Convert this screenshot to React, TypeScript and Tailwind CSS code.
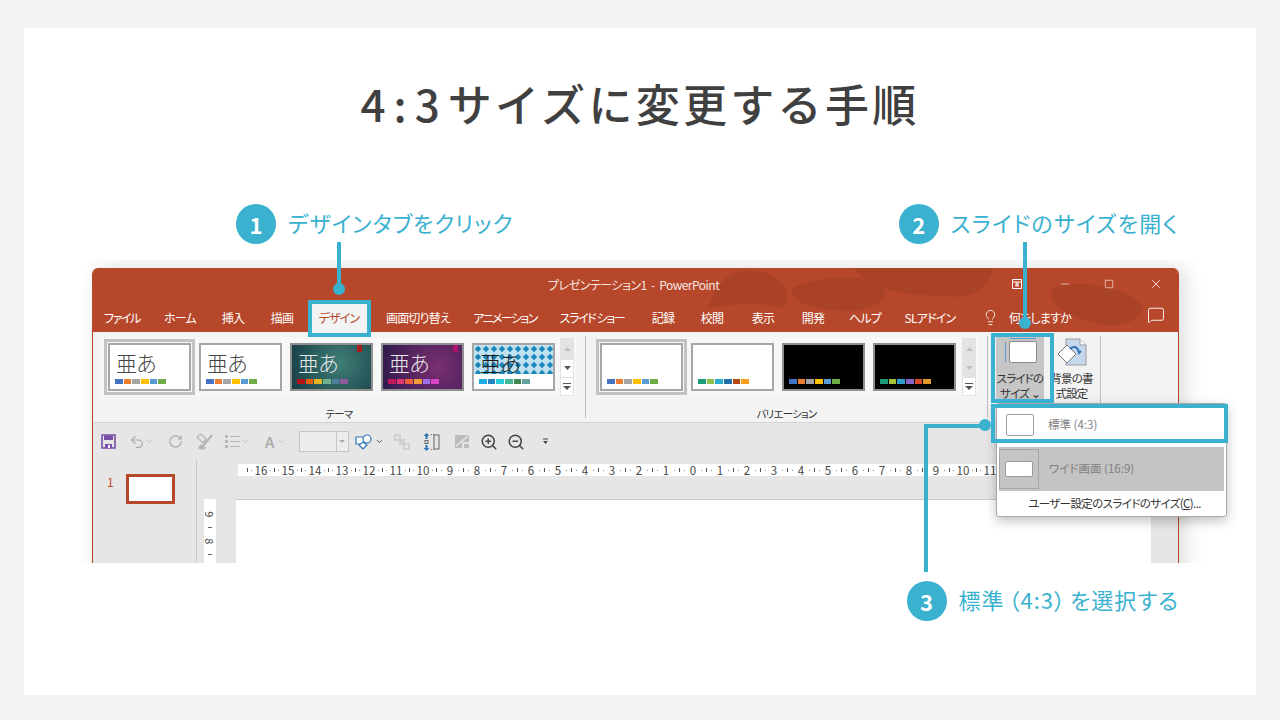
import React from "react";
import { Lightbulb, MessageSquare, Minus, Square, X, ZoomIn, ZoomOut, Undo2, RotateCw, ChevronDown } from "lucide-react";

const cyan = "bg-[#3ab1cf]";
const office = ["#4472c4", "#ed7d31", "#a5a5a5", "#ffc000", "#5b9bd5", "#70ad47"];

const tabs = [
  { label: "ファイル", cls: "w-[50px] tracking-[-1.4px]" },
  { label: "ホーム", cls: "w-[66px]" },
  { label: "挿入", cls: "w-[40px]" },
  { label: "描画", cls: "w-[58px]" },
  { label: "デザイン", cls: "w-[56px] bg-[#f3f3f3] text-[#b7472a]" },
  { label: "画面切り替え", cls: "w-[102px]" },
  { label: "アニメーション", cls: "w-[72px] tracking-[-1.6px]" },
  { label: "スライド ショー", cls: "w-[102px] tracking-[-1.4px]" },
  { label: "記録", cls: "w-[40px]" },
  { label: "校閲", cls: "w-[58px]" },
  { label: "表示", cls: "w-[44px]" },
  { label: "開発", cls: "w-[56px]" },
  { label: "ヘルプ", cls: "w-[48px]" },
  { label: "SLアドイン", cls: "w-[82px]" },
];

type ThumbProps = {
  bg?: string;
  glyphs?: string;
  colors: string[];
  dark?: boolean;
  ink?: boolean;
  selected?: boolean;
  children?: React.ReactNode;
};

function Thumb({ bg = "bg-white", glyphs, colors, dark, ink, selected, children }: ThumbProps) {
  const glyphColor = dark ? "text-[#e8e8e8]" : ink ? "text-[#1a1a1a]" : "text-[#444]";
  const card = (
    <div className={`relative h-[48px] w-[83px] shrink-0 overflow-hidden border-2 ${dark ? "border-[#8f8f8f]" : "border-[#a6a6a6]"} ${bg}`}>
      {children}
      {glyphs && (
        <span className={`absolute left-[6px] top-[3px] text-[21px] font-light leading-[28px] ${glyphColor}`}>
          {glyphs}
        </span>
      )}
      <div className="absolute left-[5px] top-[34px] flex gap-[1px]">
        {colors.map((c, i) => (
          <span key={i} className="h-[5px] w-[7.7px]" style={{ background: c }} />
        ))}
      </div>
    </div>
  );
  if (!selected) return card;
  return <div className="-mx-[4px] -my-[4px] border-[3px] border-[#c2c2c2] p-[1px]">{card}</div>;
}

function GalleryScroll({ first }: { first?: boolean }) {
  return (
    <div className="flex h-[58px] w-[14px] flex-col border border-[#e3e3e3] text-[#8a8a8a]">
      <span className="flex h-[21px] items-center justify-center bg-[#e3e3e3]">
        <svg width="7" height="4"><path d="M0 4 L3.5 0 L7 4Z" fill="#c0c0c0" /></svg>
      </span>
      <span className={`flex h-[18px] items-center justify-center border-b border-[#e3e3e3] ${first ? "bg-white" : "bg-[#e3e3e3]"}`}>
        <svg width="7" height="4"><path d="M0 0 L7 0 L3.5 4Z" fill={first ? "#555" : "#c0c0c0"} /></svg>
      </span>
      <span className="flex flex-1 items-center justify-center bg-white">
        <svg width="8" height="7"><path d="M0 0H8V1H0ZM0 3 H8 L4 7Z" fill="#555" /></svg>
      </span>
    </div>
  );
}

function Separator() {
  return <div className="h-[82px] w-px shrink-0 bg-[#bdbdbd]" />;
}

function SaveIcon() {
  return (
    <svg width="15" height="15" viewBox="0 0 15 15">
      <path d="M1 1H14V14H1Z" fill="none" stroke="#7a4ea6" strokeWidth="1.6" />
      <path d="M3 1.5H12V6H3Z" fill="#7a4ea6" />
      <path d="M4 10H11V14H4Z" fill="#7a4ea6" />
      <path d="M7 11H9V14H7Z" fill="#fff" />
    </svg>
  );
}

function ListIcon() {
  return (
    <svg width="15" height="15" viewBox="0 0 15 15" fill="#b4b4b4">
      <rect x="0" y="1" width="3" height="3" rx="1" />
      <rect x="0" y="6" width="3" height="3" rx="1" />
      <rect x="0" y="11" width="3" height="3" rx="1" />
      <rect x="5" y="2" width="10" height="1" />
      <rect x="5" y="7" width="10" height="1" />
      <rect x="5" y="12" width="10" height="1" />
    </svg>
  );
}

function BrushIcon() {
  return (
    <svg width="17" height="17" viewBox="0 0 17 17" fill="none" stroke="#b4b4b4" strokeWidth="1.3">
      <path d="M1 4 L5 1 L10 6 L7 10 Z" />
      <path d="M16 2 L7 13" strokeWidth="2" />
      <path d="M5 12 L9 15 L6 16 L3 15Z" fill="#b4b4b4" />
    </svg>
  );
}

function ShapesIcon() {
  return (
    <svg width="17" height="16" viewBox="0 0 17 16" fill="#fff" stroke="#2f75b5" strokeWidth="1.2">
      <path d="M1 3H10V10H1Z" />
      <circle cx="12" cy="5" r="4" />
      <path d="M8 8 L12 11 L8 15 L4 11Z" />
    </svg>
  );
}

function ArrangeIcon() {
  return (
    <svg width="16" height="16" viewBox="0 0 16 16" fill="#e6e6e6" stroke="#bdbdbd">
      <rect x="1" y="1" width="5" height="5" />
      <rect x="5" y="5" width="6" height="6" fill="#cfcfcf" stroke="none" />
      <rect x="10" y="10" width="5" height="5" />
    </svg>
  );
}

function AlignIcon() {
  return (
    <svg width="17" height="18" viewBox="0 0 17 18">
      <path d="M3.5 0 L6.5 3 H4.5 V6 H2.5 V3 H0.5Z" fill="#2f75b5" />
      <path d="M3.5 18 L6.5 15 H4.5 V12 H2.5 V15 H0.5Z" fill="#2f75b5" />
      <rect x="2" y="7.5" width="3" height="3" fill="none" stroke="#666" />
      <rect x="11" y="2" width="5" height="14" fill="none" stroke="#666" />
      <path d="M8 1.5H12M8 16.5H12" stroke="#666" strokeDasharray="1 1" />
    </svg>
  );
}

function CheckShapeIcon() {
  return (
    <svg width="16" height="15" viewBox="0 0 16 15" fill="#bdbdbd">
      <path d="M1 1H15V8H8V14H1Z" />
      <path d="M2 12 L14 2" stroke="#e6e6e6" strokeWidth="1.6" />
      <rect x="10" y="10" width="5" height="4" />
    </svg>
  );
}

function TinyChevron({ dark }: { dark?: boolean }) {
  return <ChevronDown size={9} strokeWidth={2} className={dark ? "text-[#333]" : "text-[#b4b4b4]"} />;
}

function RulerCell({ n }: { n: number }) {
  return (
    <span className="flex w-[27px] shrink-0 items-center justify-between">
      <i className="h-[4px] w-px bg-[#555]" />
      <i className="h-px w-px bg-[#888]" />
      <span className="text-[11.5px] leading-[12px] tracking-normal text-[#444]">{n}</span>
      <i className="h-px w-px bg-[#888]" />
      <i className="w-0" />
    </span>
  );
}

function Step({ n, children }: { n: number; children: React.ReactNode }) {
  return (
    <div className="flex h-[40px] items-center gap-[12px]">
      <span className={`flex h-[40px] w-[40px] items-center justify-center rounded-full ${cyan} text-[22px] font-bold text-white`}>
        {n}
      </span>
      <span className="pb-[5px] text-[22px] leading-[30px] tracking-[1px] text-[#3ab1cf] [font-feature-settings:'palt']">{children}</span>
    </div>
  );
}

const rulerNums = [16, 15, 14, 13, 12, 11, 10, 9, 8, 7, 6, 5, 4, 3, 2, 1, 0, 1, 2, 3, 4, 5, 6, 7, 8, 9, 10, 11];

export default function App() {
  return (
    <div
      className="relative h-[720px] w-[1280px] overflow-hidden bg-[#f2f2f2] px-[24px] pb-[25px] pt-[28px]"
      style={{ fontFamily: '"Noto Sans CJK JP", "Noto Sans", sans-serif' }}
    >
      <div className="flex h-full flex-col bg-white">
        <h1 className="mt-[44px] h-[62px] text-center text-[44px] font-medium leading-[62px] tracking-[3.3px] text-[#404040]">
          <span className="tracking-[8px]">4:3</span>サイズに変更する手順
        </h1>

        <div className="mt-[70px] flex justify-between pl-[212px] pr-[77px]">
          <Step n={1}>デザインタブをクリック</Step>
          <Step n={2}>
            <span className="tracking-[1.3px]">スライドのサイズを開く</span>
          </Step>
        </div>

        {/* app window, cut off at the bottom edge */}
        <div className="mt-[16px] h-[303px] w-[1180px] overflow-hidden pl-[68px] pt-[8px]">
          <div className="h-[340px] w-[1087px] overflow-hidden rounded-t-[6px] border-x border-[#b7472a] bg-[#e6e6e6] text-[12px] tracking-[-0.8px] text-[#333] shadow-[6px_0_20px_rgba(0,0,0,0.14)] [font-feature-settings:'palt']">
            <div className="relative h-[64px] bg-[#b7472a] text-white">
              <svg className="absolute inset-0" width="1087" height="64" viewBox="0 0 1087 64">
                <g fill="#a23f26" opacity="0.6">
                  <path d="M615 40 C625 10 640 0 665 3 C690 8 700 25 690 40 C670 34 640 36 615 40Z" />
                  <path d="M700 20 C730 6 780 6 790 20 C800 34 770 46 740 42 C715 40 695 32 700 20Z" />
                  <path d="M760 0 H900 C895 20 880 32 850 28 C810 26 780 24 760 0Z" />
                  <path d="M960 20 C985 10 1040 20 1050 40 C1045 56 1020 62 1000 54 C980 50 950 36 960 20Z" />
                </g>
              </svg>
              <div className="relative flex h-[32px] items-center">
                <span className="absolute left-[455px] top-[8px] text-[12px] leading-[18px] tracking-[-0.5px] text-[#f6e6e1]">
                  プレゼンテーション1&nbsp; -&nbsp; PowerPoint
                </span>
                <div className="ml-auto flex items-center pr-[15px]">
                  <svg width="10" height="10" viewBox="0 0 10 10" fill="none" stroke="#fff" className="mr-[37px]">
                    <path d="M0.5 0.5H9.5V9.5H0.5ZM0.5 3H9.5M5 3V7M3 5H7M3 7H7" />
                  </svg>
                  <Minus size={12} className="mr-[33px]" strokeWidth={1.2} />
                  <Square size={10} className="mr-[35px]" strokeWidth={1.4} />
                  <X size={14} strokeWidth={1.3} />
                </div>
              </div>
              <div className="relative flex h-[32px] items-stretch pl-[4px]">
                {tabs.map((t) => (
                  <span key={t.label} className={`flex items-center justify-center whitespace-nowrap pt-[3px] ${t.cls}`}>
                    {t.label}
                  </span>
                ))}
                <Lightbulb size={17} strokeWidth={1.2} className="ml-[11px] mt-[9px]" />
                <span className="ml-[10px] flex items-center pt-[3px]">何をしますか</span>
                <MessageSquare size={18} strokeWidth={1.2} className="ml-auto mr-[13px] mt-[6px]" />
              </div>
            </div>

            <div className="flex h-[91px] border-b border-[#d4d4d4] bg-[#f3f3f3]">
              <div className="flex w-[492px] shrink-0 flex-col">
                <div className="ml-[8px] mt-[5px] flex h-[59px] w-[475px] items-center gap-[8px] bg-[#f7f7f7] pl-[7px]">
                  <Thumb glyphs="亜あ" colors={office} selected />
                  <Thumb glyphs="亜あ" colors={office} />
                  <Thumb
                    bg="bg-[radial-gradient(circle_at_60%_40%,#3f7f78,#163c44)]"
                    dark
                    glyphs="亜あ"
                    colors={["#b31217", "#e8600a", "#e5b422", "#6fb08f", "#4f7f9b", "#8f5a9c"]}
                  >
                    <span className="absolute right-[9px] top-[0px] h-[7px] w-[5px] bg-[#a81c1c]" />
                  </Thumb>
                  <Thumb
                    bg="bg-[radial-gradient(circle_at_70%_50%,#7a2f72,#2f1a4c)]"
                    dark
                    glyphs="亜あ"
                    colors={["#c2185b", "#e0356d", "#e8613a", "#ee9a3a", "#a06ee8", "#d946c8"]}
                  >
                    <span className="absolute right-[4px] top-[0px] h-[7px] w-[5px] bg-[#b0126b]" />
                  </Thumb>
                  <Thumb ink glyphs="亜あ" colors={["#1cade4", "#2683c6", "#27ced7", "#42ba97", "#3e8853", "#62a39f"]}>
                    <svg className="absolute left-0 top-0" width="80" height="29">
                      <defs>
                        <pattern id="diamonds" width="8" height="8" patternUnits="userSpaceOnUse">
                          <rect width="8" height="8" fill="#bfe1f0" />
                          <path d="M4 0.8 L7.2 4 L4 7.2 L0.8 4Z" fill="#1a86b8" />
                        </pattern>
                      </defs>
                      <rect width="80" height="29" fill="url(#diamonds)" />
                    </svg>
                  </Thumb>
                  <div className="ml-[-3px]">
                    <GalleryScroll first />
                  </div>
                </div>
                <span className="mt-[10px] text-center text-[10.5px] leading-[16px]">テーマ</span>
              </div>
              <div className="mt-[4px]">
                <Separator />
              </div>
              <div className="flex w-[401px] shrink-0 flex-col">
                <div className="ml-[11px] mt-[5px] flex h-[59px] w-[381px] items-center gap-[8px] bg-[#f7f7f7] pl-[3px]">
                  <Thumb colors={office} selected />
                  <Thumb colors={["#1b9e77", "#8bc34a", "#2eaed1", "#1f6fa8", "#b7470f", "#f59f1b"]} />
                  <Thumb bg="bg-black" dark colors={office} />
                  <Thumb bg="bg-black" dark colors={["#1b9e77", "#a6c23a", "#2f9fd0", "#8a63c9", "#d9482b", "#e09a2b"]} />
                  <div className="ml-[-2px]">
                    <GalleryScroll />
                  </div>
                </div>
                <span className="mt-[10px] text-center text-[10.5px] leading-[16px]">バリエーション</span>
              </div>
              <div className="mt-[4px]">
                <Separator />
              </div>
              <div className="ml-[8px] mt-[3px] flex h-[66px] w-[48px] shrink-0 flex-col items-center bg-[#c6c6c6] pt-[6px]">
                <div className="relative ml-[5px] h-[22px] w-[28px] rounded-[2px] border border-[#8a8a8a] bg-white">
                  <span className="absolute -left-[5px] top-0 h-full w-px bg-[#5b9bd5]" />
                  <span className="absolute -top-[4px] left-0 h-px w-full bg-[#5b9bd5]" />
                </div>
                <span className="mt-[8px] whitespace-nowrap text-center text-[11.5px] leading-[15px]">
                  スライドの
                  <br />
                  サイズ ⌄
                </span>
              </div>
              <div className="ml-[4px] flex w-[47px] shrink-0 flex-col items-center pt-[6px]">
                <svg width="30" height="29" viewBox="0 0 30 29">
                  <path d="M9 1H23L29 7V27H9Z" fill="#c5d8ee" stroke="#9a9a9a" />
                  <path d="M23 1V7H29" fill="#fff" stroke="#9a9a9a" />
                  <path d="M1 16 L10 7 L19 16 L10 25Z" fill="#fff" stroke="#777" />
                  <path d="M13 11 C17 7 21 9 22 15 L24 13" fill="none" stroke="#2f75b5" strokeWidth="2" />
                </svg>
                <span className="mt-[4px] whitespace-nowrap text-center text-[11.5px] leading-[15px]">
                  背景の書
                  <br />
                  式設定
                </span>
              </div>
              <div className="ml-[5px] mt-[4px]">
                <Separator />
              </div>
            </div>

            <div className="flex h-[37px] items-center pl-[8px]">
              <SaveIcon />
              <Undo2 size={16} className="ml-[13px] text-[#a9a9a9]" strokeWidth={1.8} />
              <TinyChevron />
              <RotateCw size={15} className="ml-[14px] text-[#a9a9a9]" strokeWidth={1.8} />
              <span className="ml-[13px] flex">
                <BrushIcon />
              </span>
              <span className="ml-[12px] flex">
                <ListIcon />
              </span>
              <span className="ml-[1px]">
                <TinyChevron />
              </span>
              <span className="ml-[15px] text-[15px] font-medium leading-none text-[#a9a9a9]">A</span>
              <span className="ml-[3px]">
                <TinyChevron />
              </span>
              <div className="ml-[13px] flex h-[21px] w-[50px] border border-[#c6c6c6] bg-[#ececec]">
                <div className="flex-1 border-r border-[#c6c6c6]" />
                <span className="flex w-[11px] items-center justify-center">
                  <svg width="6" height="3"><path d="M0 0H6L3 3Z" fill="#aaa" /></svg>
                </span>
              </div>
              <span className="ml-[6px] flex">
                <ShapesIcon />
              </span>
              <span className="ml-[3px]">
                <TinyChevron dark />
              </span>
              <span className="ml-[10px] flex">
                <ArrangeIcon />
              </span>
              <span className="ml-[13px] flex">
                <AlignIcon />
              </span>
              <span className="ml-[14px] flex">
                <CheckShapeIcon />
              </span>
              <ZoomIn size={18} strokeWidth={2} className="ml-[10px] text-[#444]" />
              <ZoomOut size={18} strokeWidth={2} className="ml-[9px] text-[#444]" />
              <svg width="7" height="7" viewBox="0 0 7 7" className="ml-[17px]">
                <path d="M1 0.5H6V1.5H1ZM1 3H6L3.5 6Z" fill="#444" />
              </svg>
            </div>

            <div className="flex h-[200px]">
              <div className="flex w-[104px] shrink-0 items-start border-r border-[#c8c8c8] pl-[14px] pt-[13px]">
                <span className="w-[19px] text-[12px] leading-[18px] text-[#c8492c]">1</span>
                <div className="mt-[1px] h-[30px] w-[49px] border-[3px] border-[#b7472a] bg-white" />
              </div>
              <div className="flex-1 pl-[7px] pt-[4px]">
                <div className="ml-[34px] flex h-[12px] w-[766px] items-center bg-white pl-[9px]">
                  {rulerNums.map((n, i) => (
                    <RulerCell key={i} n={n} />
                  ))}
                </div>
                <div className="mt-[23px] flex items-start">
                  <div className="flex h-[70px] w-[12px] flex-col items-center bg-white pt-[8px]">
                    <span className="rotate-90 text-[11px] leading-[14px] text-[#444]">9</span>
                    <span className="my-[6px] h-px w-[4px] bg-[#666]" />
                    <span className="rotate-90 text-[11px] leading-[14px] text-[#444]">8</span>
                    <span className="my-[6px] h-px w-[4px] bg-[#666]" />
                  </div>
                  <div className="ml-[20px] h-[120px] w-[915px] border-t border-[#c8c8c8] bg-white" />
                </div>
              </div>
            </div>
          </div>
        </div>

        <div className="mt-[18px] flex justify-end pr-[77px]">
          <Step n={3}>
            標準<span className="mx-[4px]">（4:3）</span>を選択する
          </Step>
        </div>
      </div>

      {/* slide size menu, opened over the ribbon */}
      <div className="absolute left-[996px] top-[403px] h-[114px] w-[231px] rounded-[3px] border border-[#a8a8a8] bg-white shadow-[0_4px_12px_rgba(0,0,0,0.25)] [font-feature-settings:'palt']">
        <div className="flex h-[37px] items-center pl-[9px] pt-[5px]">
          <div className="h-[22px] w-[28px] rounded-[2px] border border-[#a0a0a0] bg-white" />
          <span className="ml-[14px] text-[11.5px] text-[#7f7f7f]">標準 (4:3)</span>
        </div>
        <div className="mx-[2px] mt-[6px] flex h-[44px] items-center bg-[#c4c4c4]">
          <div className="flex h-[40px] w-[40px] items-center justify-center border border-[#a6a6a6]">
            <div className="h-[16px] w-[28px] rounded-[2px] border border-[#9a9a9a] bg-white" />
          </div>
          <span className="ml-[10px] text-[11.5px] text-[#7f7f7f]">ワイド画面 (16:9)</span>
        </div>
        <div className="mt-[3px] pl-[6px] text-center text-[11.5px] leading-[18px] tracking-[-0.6px] text-[#333]">
          ユーザー設定のスライドのサイズ(<span className="underline">C</span>)...
        </div>
      </div>

      {/* numbered callout lines and highlight boxes */}
      <div className="absolute left-[308px] top-[300px] h-[37px] w-[63px] border-[4px] border-[#3ab1cf]" />
      <div className="absolute left-[991px] top-[333px] h-[70px] w-[63px] border-[4px] border-[#3ab1cf]" />
      <div className="absolute left-[991px] top-[404px] h-[39px] w-[237px] border-[4px] border-[#3ab1cf]" />

      <div className={`absolute left-[337px] top-[242px] h-[47px] w-[4px] ${cyan}`} />
      <div className={`absolute left-[333px] top-[283px] h-[12px] w-[12px] rounded-full ${cyan}`} />
      <div className={`absolute left-[1023px] top-[242px] h-[80px] w-[4px] ${cyan}`} />
      <div className={`absolute left-[1019px] top-[317px] h-[12px] w-[12px] rounded-full ${cyan}`} />
      <div className={`absolute left-[924px] top-[424px] h-[148px] w-[4px] ${cyan}`} />
      <div className={`absolute left-[924px] top-[424px] h-[4px] w-[60px] ${cyan}`} />
      <div className={`absolute left-[979px] top-[419px] h-[12px] w-[12px] rounded-full ${cyan}`} />
    </div>
  );
}
